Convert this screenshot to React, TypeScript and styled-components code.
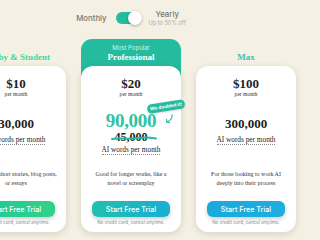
import React from "react";
import styled, { createGlobalStyle, css } from "styled-components";

const TEAL = "#25bb9f";

const Global = createGlobalStyle`
  html, body { margin: 0; padding: 0; background: #f4f0e3; overflow: hidden; }
  body { width: 320px; height: 240px; }
  * { box-sizing: border-box; }
`;

const Page = styled.div`
  width: 330px;
  margin-left: -34px;
  padding-top: 10px;
  display: flex;
  flex-direction: column;
  align-items: center;
`;

const ToggleRow = styled.div`
  height: 16px;
  display: flex;
  align-items: center;
  justify-content: center;
  gap: 8px;
  font-family: Inter, "Liberation Sans", sans-serif;
`;

const ToggleLabel = styled.span`
  font-size: 7.8px;
  font-weight: 500;
  color: #7a7770;
`;

const YearlyStack = styled.div`
  display: flex;
  flex-direction: column;
  align-items: center;
  line-height: 9px;
`;

const Hint = styled.span`
  font-size: 5.6px;
  color: #b0ada3;
  line-height: 8px;
`;

const Switch = styled.div`
  position: relative;
  width: 25px;
  height: 12px;
  margin-left: 1px;
  border-radius: 6px;
  background: ${TEAL};
`;

const Knob = styled.div`
  position: absolute;
  right: -1px;
  top: -1px;
  width: 14px;
  height: 14px;
  border-radius: 50%;
  background: #fff;
  box-shadow: 0 1px 3px rgba(0, 0, 0, 0.3);
`;

const Columns = styled.div`
  margin-top: 13px;
  display: flex;
  gap: 15px;
`;

const Plan = styled.div<{ $featured?: boolean }>`
  width: 100px;
  display: flex;
  flex-direction: column;
  border-radius: 11px 11px 0 0;
  ${(p) =>
    p.$featured &&
    css`
      background: linear-gradient(to bottom, ${TEAL} 0, ${TEAL} 40px, transparent 40px);
    `}
`;

const PlanHead = styled.div`
  height: 27px;
  display: flex;
  flex-direction: column;
  align-items: center;
  justify-content: flex-end;
  padding-bottom: 4px;
`;

const Popular = styled.div`
  font-family: Inter, "Liberation Sans", sans-serif;
  font-size: 6px;
  line-height: 8px;
  color: rgba(255, 255, 255, 0.82);
`;

const PlanTitle = styled.div<{ $color: string }>`
  font-family: "Liberation Serif", serif;
  font-weight: 700;
  font-size: 9px;
  line-height: 10px;
  white-space: nowrap;
  color: ${(p) => p.$color};
`;

const Card = styled.div`
  position: relative;
  height: 166px;
  background: #fff;
  border-radius: 12px;
  box-shadow: 0 2px 7px rgba(60, 50, 20, 0.16);
  padding: 11px 8px 6px;
  display: flex;
  flex-direction: column;
  align-items: center;
  font-family: "Liberation Serif", serif;
  color: #1d1d1d;
`;

const Price = styled.div`
  font-weight: 700;
  font-size: 13px;
  line-height: 14px;
`;

const Per = styled.div`
  font-size: 5.6px;
  line-height: 6px;
  color: #333;
`;

const Words = styled.div<{ $featured?: boolean }>`
  font-weight: 700;
  white-space: nowrap;
  ${(p) =>
    p.$featured
      ? css`
          margin-top: 14px;
          font-size: 19px;
          letter-spacing: -0.3px;
          line-height: 20px;
          color: #2ec4a5;
        `
      : css`
          margin-top: 19px;
          font-size: 13px;
          line-height: 16px;
        `}
`;

const Struck = styled.div`
  position: relative;
  font-weight: 700;
  font-size: 12px;
  line-height: 12px;
  color: #1d1d1d;
`;

const StrikeMark = styled.svg`
  position: absolute;
  left: -4px;
  top: 4px;
  width: 46px;
  height: 6px;
  overflow: visible;
`;

const WordsLabel = styled.div<{ $featured?: boolean }>`
  margin-top: ${(p) => (p.$featured ? 2 : 3)}px;
  font-size: 7.3px;
  line-height: 9px;
  white-space: nowrap;
  color: #222;
  border-bottom: 1px dotted #8a8a8a;
`;

const Bottom = styled.div`
  margin-top: auto;
  width: 100%;
  display: flex;
  flex-direction: column;
  align-items: center;
`;

const Desc = styled.div`
  font-size: 6px;
  line-height: 9px;
  text-align: center;
  color: #333;
  height: 18px;
`;

const Button = styled.div<{ $bg: string }>`
  margin-top: 13.5px;
  width: 78px;
  height: 16px;
  border-radius: 6px;
  background: ${(p) => p.$bg};
  box-shadow: 0 2px 4px rgba(0, 0, 0, 0.2);
  display: flex;
  align-items: center;
  justify-content: center;
  font-family: Inter, "Liberation Sans", sans-serif;
  font-weight: 500;
  font-size: 7.2px;
  color: #fff;
  white-space: nowrap;
`;

const Note = styled.div`
  margin-top: 3px;
  font-family: Inter, "Liberation Sans", sans-serif;
  font-size: 4.6px;
  line-height: 6px;
  color: #8d8d8d;
  white-space: nowrap;
`;

const Badge = styled.div`
  position: absolute;
  left: 66px;
  top: 36px;
  width: 38px;
  height: 9px;
  border-radius: 5px;
  background: ${TEAL};
  box-shadow: 0 1px 2px rgba(0, 0, 0, 0.15);
  transform: rotate(-9deg);
  display: flex;
  align-items: center;
  justify-content: center;
  font-family: Inter, "Liberation Sans", sans-serif;
  font-weight: 700;
  font-size: 4.6px;
  color: #fff;
  white-space: nowrap;
`;

const Arrow = styled.svg`
  position: absolute;
  left: 83px;
  top: 48px;
  width: 10px;
  height: 10px;
  overflow: visible;
`;

type PlanData = {
  title: string;
  titleColor: string;
  price: string;
  words: string;
  old?: string;
  desc: string;
  button: string;
  featured?: boolean;
};

const plans: PlanData[] = [
  {
    title: "Hobby & Student",
    titleColor: "#43d698",
    price: "$10",
    words: "30,000",
    desc: "Good for short stories, blog posts, or essays",
    button: "linear-gradient(90deg, #1fc79a, #32d18a)",
  },
  {
    title: "Professional",
    titleColor: "#ffffff",
    price: "$20",
    words: "90,000",
    old: "45,000",
    desc: "Good for longer works, like a novel or screenplay",
    button: "linear-gradient(90deg, #20c0ae, #18afd3)",
    featured: true,
  },
  {
    title: "Max",
    titleColor: "#3cc0ae",
    price: "$100",
    words: "300,000",
    desc: "For those looking to work AI deeply into their process",
    button: "linear-gradient(90deg, #19a9db, #1daedf)",
  },
];

export default function App() {
  return (
    <>
      <Global />
      <Page>
        <ToggleRow>
          <ToggleLabel>Monthly</ToggleLabel>
          <Switch>
            <Knob />
          </Switch>
          <YearlyStack>
            <ToggleLabel>Yearly</ToggleLabel>
            <Hint>Up to 50% off</Hint>
          </YearlyStack>
        </ToggleRow>
        <Columns>
          {plans.map((p) => (
            <Plan key={p.title} $featured={p.featured}>
              <PlanHead>
                {p.featured && <Popular>Most Popular</Popular>}
                <PlanTitle $color={p.titleColor}>{p.title}</PlanTitle>
              </PlanHead>
              <Card>
                <Price>{p.price}</Price>
                <Per>per month</Per>
                <Words $featured={p.featured}>{p.words}</Words>
                {p.old && (
                  <Struck>
                    {p.old}
                    <StrikeMark viewBox="0 0 46 6">
                      <path
                        d="M1 4 C 8 2.5, 16 4.5, 24 3.2 S 38 2.2, 45 3.4"
                        fill="none"
                        stroke={TEAL}
                        strokeWidth="2"
                        strokeLinecap="round"
                      />
                    </StrikeMark>
                  </Struck>
                )}
                <WordsLabel $featured={p.featured}>AI words per month</WordsLabel>
                <Bottom>
                  <Desc>{p.desc}</Desc>
                  <Button $bg={p.button}>Start Free Trial</Button>
                  <Note>No credit card, cancel anytime.</Note>
                </Bottom>
                {p.featured && (
                  <>
                    <Badge>We doubled it!</Badge>
                    <Arrow viewBox="0 0 10 10">
                      <path
                        d="M8 0.5 C 8.5 4, 6.5 6.5, 3 8"
                        fill="none"
                        stroke={TEAL}
                        strokeWidth="1.1"
                        strokeLinecap="round"
                      />
                      <path
                        d="M2.6 5.2 L 2.8 8.2 L 5.6 8.6"
                        fill="none"
                        stroke={TEAL}
                        strokeWidth="1.1"
                        strokeLinecap="round"
                        strokeLinejoin="round"
                      />
                    </Arrow>
                  </>
                )}
              </Card>
            </Plan>
          ))}
        </Columns>
      </Page>
    </>
  );
}
